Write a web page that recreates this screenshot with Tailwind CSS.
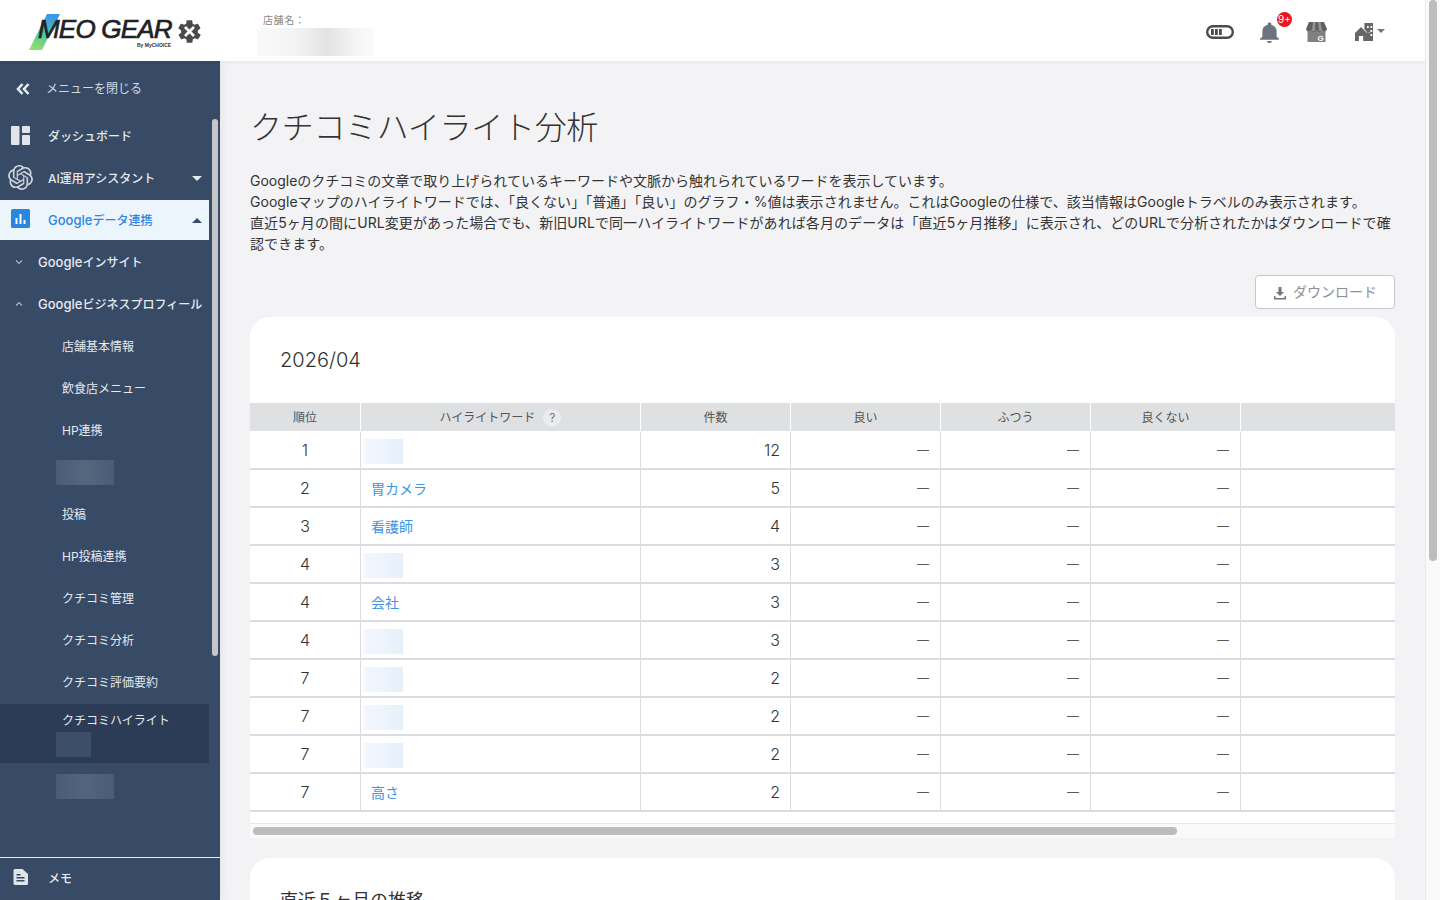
<!DOCTYPE html>
<html lang="ja">

<head>
    <meta charset="UTF-8">
    <meta name="viewport" content="width=device-width, initial-scale=1.0">
    <title>クチコミハイライト分析</title>
    <script src="https://cdn.jsdelivr.net/npm/@tailwindcss/browser@4"></script>
</head>

<body class="h-[900px] overflow-hidden bg-[#f3f3f6] text-[#333] font-['Inter','Noto_Sans_CJK_JP',sans-serif]">
    <div class="flex h-[900px]">
        <div class="w-[1425px] h-[900px] flex flex-col overflow-hidden">
            <!-- header -->
            <header class="h-[61px] shrink-0 bg-white flex items-center shadow-[0_1px_4px_rgba(0,0,0,0.06)] z-10">
                <div class="w-[257px] pl-[29px] pt-[4px] flex items-center shrink-0">
                    <div class="relative w-[175px] h-[38px]">
                        <svg class="absolute left-0 top-0" width="32" height="37" viewBox="0 0 32 37">
                            <defs>
                                <linearGradient id="lg" x1="0.6" y1="0" x2="0.3" y2="1">
                                    <stop offset="0" stop-color="#3b96f0" />
                                    <stop offset="0.5" stop-color="#4cc2a0" />
                                    <stop offset="1" stop-color="#8fe070" />
                                </linearGradient>
                            </defs>
                            <path d="M18 0h13L13 36H0z" fill="url(#lg)" />
                        </svg>
                        <span class="absolute left-[9px] top-[3px] font-['Liberation_Sans'] italic font-normal text-[26px] leading-[24px] tracking-[-0.8px] whitespace-nowrap text-[#1f2226] [-webkit-text-stroke:0.7px_#1f2226]">MEO GEAR</span>
                        <span class="absolute left-[108px] top-[28px] font-['Liberation_Sans'] font-bold text-[5px] leading-[7px] text-[#333]">By MyCHOICE</span>
                        <svg class="absolute left-[147px] top-[4px]" width="27" height="27" viewBox="0 0 24 24" fill="#4a4a4a">
                            <path d="M19.4 13a7.6 7.6 0 0 0 0-2l2.1-1.6a.5.5 0 0 0 .1-.7l-2-3.4a.5.5 0 0 0-.6-.2l-2.5 1a7.3 7.3 0 0 0-1.7-1l-.4-2.6a.5.5 0 0 0-.5-.5h-4a.5.5 0 0 0-.5.5l-.4 2.6a7.3 7.3 0 0 0-1.7 1l-2.5-1a.5.5 0 0 0-.6.2l-2 3.4a.5.5 0 0 0 .1.7L4.6 11a7.6 7.6 0 0 0 0 2l-2.1 1.6a.5.5 0 0 0-.1.7l2 3.4c.1.2.4.3.6.2l2.5-1c.5.4 1.1.8 1.7 1l.4 2.6c0 .3.2.5.5.5h4c.3 0 .5-.2.5-.5l.4-2.6c.6-.3 1.2-.6 1.7-1l2.5 1c.2.1.5 0 .6-.2l2-3.4a.5.5 0 0 0-.1-.7z" />
                            <path d="M8 8l8 8M16 8l-8 8" stroke="#fff" stroke-width="2.4" />
                        </svg>
                    </div>
                </div>
                <div class="w-[117px] shrink-0 pt-[7px]">
                    <div class="pl-[6px] text-[10px] leading-[14px] text-[#888] tracking-[0.6px]">店舗名：</div>
                    <div class="h-[28px] mt-[1px] bg-[linear-gradient(90deg,#fafafa_0%,#f2f2f2_35%,#e3e3e3_60%,#f5f5f5_85%,#fbfbfb_100%)]"></div>
                </div>
                <div class="flex-1"></div>
                <div class="flex items-center pt-[3px]">
                    <svg class="mr-[26px]" width="28" height="14" viewBox="0 0 28 14">
                        <rect x="1.2" y="1.2" width="25.6" height="11.6" rx="5.8" fill="none" stroke="#4a4a4a" stroke-width="2.4" />
                        <rect x="5" y="4" width="2.8" height="6" fill="#4a4a4a" />
                        <rect x="9" y="4" width="2.8" height="6" fill="#4a4a4a" />
                        <rect x="13" y="4" width="2.8" height="6" fill="#4a4a4a" />
                    </svg>
                    <div class="relative w-[19px] h-[21px] mr-[27px]">
                        <svg width="19" height="21" viewBox="4 2 16 20" preserveAspectRatio="none" fill="#6b7480">
                            <path d="M12 22c1.1 0 2-.9 2-2h-4c0 1.100.9 2 2 2zm6-6v-5c0-3.070-1.640-5.640-4.500-6.320V4c0-.830-.670-1.500-1.500-1.500s-1.500.670-1.500 1.500v.680C7.630 5.360 6 7.920 6 11v5l-2 2v1h16v-1l-2-2z" />
                        </svg>
                        <span class="absolute left-[17px] top-[-10px] w-[15px] h-[15px] rounded-full bg-[#e8141f] text-white text-[10px] leading-[15px] text-center">9+</span>
                    </div>
                    <svg class="mr-[28px]" width="21" height="20" viewBox="0 0 21 20">
                        <path d="M1.500 8h18v12h-18z" fill="#808080" />
                        <path d="M3 0h15l3 7a2.600 2.600 0 0 1-5 .6 2.800 2.800 0 0 1-5.500 0 2.800 2.800 0 0 1-5.500 0A2.600 2.600 0 0 1 0 7z" fill="#5f5f5f" />
                        <path d="M7 0h2.500L9 9H6zM12 0h2.500L16 9h-3z" fill="#939393" />
                        <text x="11.500" y="18.500" font-size="8" font-weight="700" fill="#fff" font-family="Liberation Sans">G</text>
                    </svg>
                    <svg class="mr-[4px]" width="18" height="18" viewBox="0 0 21 18" preserveAspectRatio="none" fill="#666">
                        <path d="M11 0h10v18h-7V9l-3-2.500z" />
                        <path d="M7 4l7 6v8H9.500v-5h-5v5H0v-8z" />
                        <path d="M14 3h2v2h-2zM18 3h2v2h-2zM18 7h2v2h-2zM18 11h2v2h-2zM16 9h1v1h-1z" fill="#fff" />
                    </svg>
                    <span class="mr-[40px] w-0 h-0 border-x-[4px] border-x-transparent border-t-[4px] border-t-[#777] mb-[2px]"></span>
                </div>
            </header>

            <div class="flex flex-1 min-h-0">
                <!-- sidebar -->
                <aside class="relative w-[220px] shrink-0 bg-[#374a66] text-[#e6e9ee] text-[12px] font-medium shadow-[2px_0_8px_rgba(0,0,0,0.06)] flex flex-col">
                    <div class="h-[54px] shrink-0 flex items-center pl-[16px] pt-[1px] font-normal">
                        <svg width="14" height="12" viewBox="0 0 14 12" fill="none" stroke="#e6e9ee" stroke-width="2.600">
                            <path d="M6.500 1L2 6l4.500 5M12.500 1L8 6l4.500 5" />
                        </svg>
                        <span class="ml-[16px] text-[#d4d9e0]">メニューを閉じる</span>
                    </div>
                    <div class="w-[209px] flex-1 min-h-0">
                        <div class="h-[42px] flex items-center">
                            <svg class="ml-[11px] mb-[2px]" width="19" height="19" viewBox="0 0 19 19" fill="#e1e5ea">
                                <rect x="0" y="0" width="8.500" height="19" rx="1" />
                                <rect x="11" y="0" width="8" height="7" rx="1" />
                                <rect x="11" y="9" width="8" height="10" rx="1" />
                            </svg>
                            <span class="ml-[18px] pt-[2px]">ダッシュボード</span>
                        </div>
                        <div class="h-[42px] flex items-center">
                            <svg class="ml-[8px] mb-[2px]" width="25" height="25" viewBox="0 0 24 24" fill="#cfd4db">
                                <path d="M22.2819 9.8211a5.9847 5.9847 0 0 0-.5157-4.9108 6.0462 6.0462 0 0 0-6.5098-2.9A6.0651 6.0651 0 0 0 4.9807 4.1818a5.9847 5.9847 0 0 0-3.9977 2.9 6.0462 6.0462 0 0 0 .7427 7.0966 5.98 5.98 0 0 0 .511 4.9107 6.051 6.051 0 0 0 6.5146 2.9001A5.9847 5.9847 0 0 0 13.2599 24a6.0557 6.0557 0 0 0 5.7718-4.2058 5.9894 5.9894 0 0 0 3.9977-2.9001 6.0557 6.0557 0 0 0-.7475-7.0729zm-9.022 12.6081a4.4755 4.4755 0 0 1-2.8764-1.0408l.1419-.0804 4.7783-2.7582a.7948.7948 0 0 0 .3927-.6813v-6.7369l2.02 1.1686a.071.071 0 0 1 .038.052v5.5826a4.504 4.504 0 0 1-4.4945 4.4944zm-9.6607-4.1254a4.4708 4.4708 0 0 1-.5346-3.0137l.142.0852 4.783 2.7582a.7712.7712 0 0 0 .7806 0l5.8428-3.3685v2.3324a.0804.0804 0 0 1-.0332.0615L9.74 19.9502a4.4992 4.4992 0 0 1-6.1408-1.6464zM2.3408 7.8956a4.485 4.485 0 0 1 2.3655-1.9728V11.6a.7664.7664 0 0 0 .3879.6765l5.8144 3.3543-2.0201 1.1685a.0757.0757 0 0 1-.071 0l-4.8303-2.7865A4.504 4.504 0 0 1 2.3408 7.872zm16.5963 3.8558L13.1038 8.364 15.1192 7.2a.0757.0757 0 0 1 .071 0l4.8303 2.7913a4.4944 4.4944 0 0 1-.6765 8.1042v-5.6772a.79.79 0 0 0-.407-.667zm2.0107-3.0231l-.142-.0852-4.7735-2.7818a.7759.7759 0 0 0-.7854 0L9.409 9.2297V6.8974a.0662.0662 0 0 1 .0284-.0615l4.8303-2.7866a4.4992 4.4992 0 0 1 6.6802 4.66zM8.3065 12.863l-2.02-1.1638a.0804.0804 0 0 1-.038-.0567V6.0742a4.4992 4.4992 0 0 1 7.3757-3.4537l-.142.0805L8.704 5.459a.7948.7948 0 0 0-.3927.6813zm1.0976-2.3654l2.602-1.4998 2.6069 1.4998v2.9994l-2.5974 1.4997-2.6067-1.4997Z" />
                            </svg>
                            <span class="ml-[15px] pt-[2px]">AI運用アシスタント</span>
                            <span class="ml-auto mr-[7px] w-0 h-0 border-x-[5px] border-x-transparent border-t-[5px] border-t-[#e6e9ee]"></span>
                        </div>
                        <div class="h-[40px] my-[1px] bg-[#ecf4fc] flex items-center text-[#2b86e0]">
                            <svg class="ml-[11px] mb-[4px]" width="19" height="19" viewBox="0 0 19 19">
                                <rect width="19" height="19" rx="1.500" fill="#2b86e0" />
                                <path d="M4.500 9h2v6h-2zM8.500 5h2v10h-2zM12.500 11h2v4h-2z" fill="#fff" />
                            </svg>
                            <span class="ml-[18px] pt-[2px]"><span class="text-[13px]">Google</span>データ連携</span>
                            <span class="ml-auto mr-[7px] w-0 h-0 border-x-[5px] border-x-transparent border-b-[5px] border-b-[#374a66]"></span>
                        </div>
                        <div class="h-[42px] flex items-center">
                            <svg class="ml-[15px]" width="8" height="6" viewBox="0 0 8 6" fill="none" stroke="#aeb6c2" stroke-width="1.200">
                                <path d="M1 1.500l3 3 3-3" />
                            </svg>
                            <span class="ml-[15px] pt-[2px]"><span class="text-[13px]">Google</span>インサイト</span>
                        </div>
                        <div class="h-[42px] flex items-center">
                            <svg class="ml-[15px]" width="8" height="6" viewBox="0 0 8 6" fill="none" stroke="#aeb6c2" stroke-width="1.200">
                                <path d="M1 4.500l3-3 3 3" />
                            </svg>
                            <span class="ml-[15px] pt-[2px] whitespace-nowrap"><span class="text-[13px]">Google</span>ビジネスプロフィール</span>
                        </div>
                        <div class="h-[42px] flex items-center pl-[62px] pt-[2px] font-normal">店舗基本情報</div>
                        <div class="h-[42px] flex items-center pl-[62px] pt-[2px] font-normal">飲食店メニュー</div>
                        <div class="h-[42px] flex items-center pl-[62px] pt-[2px] font-normal">HP連携</div>
                        <div class="h-[42px] flex items-center pl-[56px]">
                            <div class="w-[58px] h-[25px] bg-[linear-gradient(90deg,#4a5c77,#56677f,#4a5c77)]"></div>
                        </div>
                        <div class="h-[42px] flex items-center pl-[62px] pt-[2px] font-normal">投稿</div>
                        <div class="h-[42px] flex items-center pl-[62px] pt-[2px] font-normal">HP投稿連携</div>
                        <div class="h-[42px] flex items-center pl-[62px] pt-[2px] font-normal">クチコミ管理</div>
                        <div class="h-[42px] flex items-center pl-[62px] pt-[2px] font-normal">クチコミ分析</div>
                        <div class="h-[42px] flex items-center pl-[62px] pt-[2px] font-normal">クチコミ評価要約</div>
                        <div class="h-[59px] mt-[1px] bg-[#2c3c57] pl-[62px] pt-[8px] font-normal">
                            <div class="leading-[18px]">クチコミハイライト</div>
                            <div class="w-[35px] h-[25px] mt-[2px] -ml-[6px] bg-[#3d4e68]"></div>
                        </div>
                        <div class="h-[25px] w-[58px] ml-[56px] mt-[11px] bg-[linear-gradient(90deg,#4a5c77,#53647d,#4a5c77)]"></div>
                    </div>
                    <div class="absolute left-[212px] top-[58px] w-[6px] h-[537px] rounded-full bg-[#c4c6ca]"></div>
                    <div class="absolute bottom-0 left-0 right-0 h-[43px] bg-[#374a66] border-t border-[#e6e9ee] flex items-center">
                        <svg class="ml-[13px] mb-[5px]" width="15" height="16" viewBox="0 0 15 16" fill="#e1e5ea">
                            <path d="M2 0h7.500L15 5v9.500a1.500 1.500 0 0 1-1.500 1.500h-11.500A1.500 1.500 0 0 1 .5 14.500v-13A1.500 1.500 0 0 1 2 0z" />
                            <path d="M3.500 8h8v1.500h-8zM3.500 11h8v1.500h-8zM3.500 5h4v1.500h-4z" fill="#374a66" />
                        </svg>
                        <span class="ml-[20px]">メモ</span>
                    </div>
                </aside>

                <!-- main -->
                <main class="flex-1 min-w-0 pl-[30px] pr-[30px] overflow-hidden">
                    <h1 class="mt-[45px] text-[32px] leading-[44px] font-light tracking-[-0.3px] text-[#333]">クチコミハイライト分析</h1>
                    <div class="mt-[20px] text-[14px] leading-[21px] text-[#333]">
                        <p>Googleのクチコミの文章で取り上げられているキーワードや文脈から触れられているワードを表示しています。</p>
                        <p class="tracking-[0.04px]">Googleマップのハイライトワードでは、「良くない」「普通」「良い」のグラフ・%値は表示されません。これはGoogleの仕様で、該当情報はGoogleトラベルのみ表示されます。</p>
                        <p class="tracking-[0.08px]">直近5ヶ月の間にURL変更があった場合でも、新旧URLで同一ハイライトワードがあれば各月のデータは「直近5ヶ月推移」に表示され、どのURLで分析されたかはダウンロードで確認できます。</p>
                    </div>
                    <div class="flex justify-end mt-[21px]">
                        <button class="w-[140px] h-[34px] pb-[2px] bg-white border border-[#c4c7cf] rounded-[4px] flex items-center justify-center text-[14px] text-[#8a8f98]">
                            <svg class="mr-[6px] mt-[3px]" width="14" height="14" viewBox="0 0 14 14" fill="#6f7680">
                                <path d="M5.500 1h3v5h2.500L7 10 3 6h2.500zM1 10h1.500v2h9v-2H13v3.500H1z" />
                            </svg>
                            ダウンロード
                        </button>
                    </div>

                    <section class="mt-[8px] bg-white rounded-t-[20px]">
                        <h2 class="h-[86px] pl-[30px] pt-[29px] text-[20px] leading-[28px] font-light text-[#333]">2026/04</h2>
                        <div class="grid grid-cols-[111px_280px_150px_150px_150px_150px_154px] h-[28px] bg-[#dfe0e2] text-[12px] text-[#555] text-center">
                            <div class="flex items-center justify-center pt-[1px] border-r border-white">順位</div>
                            <div class="flex items-center justify-center pt-[1px] border-r border-white">ハイライトワード<span class="ml-[8px] w-[18px] h-[18px] rounded-full bg-[#ececee] text-[#777] text-[12px] leading-[18px]">?</span></div>
                            <div class="flex items-center justify-center pt-[1px] border-r border-white">件数</div>
                            <div class="flex items-center justify-center pt-[1px] border-r border-white">良い</div>
                            <div class="flex items-center justify-center pt-[1px] border-r border-white">ふつう</div>
                            <div class="flex items-center justify-center pt-[1px] border-r border-white">良くない</div>
                            <div></div>
                        </div>
                        <div id="rows" class="pt-[1px] text-[16px] font-light text-[#333]">
                            <div class="grid grid-cols-[111px_280px_150px_150px_150px_150px_154px] h-[38px] border-b-2 border-[#dcdce0]">
                                <div class="flex items-center justify-center border-r border-[#dcdce0]">1</div>
                                <div class="flex items-center pl-[3px] pt-[3px] border-r border-[#dcdce0]"><div class="w-[39px] h-[25px] bg-[linear-gradient(90deg,#f2f7fd,#e6f0fb)]"></div></div>
                                <div class="flex items-center justify-end pr-[10px] border-r border-[#dcdce0]">12</div>
                                <div class="flex items-center justify-end pr-[11px] text-[12px] border-r border-[#dcdce0]">—</div>
                                <div class="flex items-center justify-end pr-[11px] text-[12px] border-r border-[#dcdce0]">—</div>
                                <div class="flex items-center justify-end pr-[11px] text-[12px] border-r border-[#dcdce0]">—</div>
                                <div></div>
                            </div>
                            <div class="grid grid-cols-[111px_280px_150px_150px_150px_150px_154px] h-[38px] border-b-2 border-[#dcdce0]">
                                <div class="flex items-center justify-center border-r border-[#dcdce0]">2</div>
                                <div class="flex items-center pl-[10px] text-[14px] font-normal text-[#3d93e6] border-r border-[#dcdce0]">胃カメラ</div>
                                <div class="flex items-center justify-end pr-[10px] border-r border-[#dcdce0]">5</div>
                                <div class="flex items-center justify-end pr-[11px] text-[12px] border-r border-[#dcdce0]">—</div>
                                <div class="flex items-center justify-end pr-[11px] text-[12px] border-r border-[#dcdce0]">—</div>
                                <div class="flex items-center justify-end pr-[11px] text-[12px] border-r border-[#dcdce0]">—</div>
                                <div></div>
                            </div>
                            <div class="grid grid-cols-[111px_280px_150px_150px_150px_150px_154px] h-[38px] border-b-2 border-[#dcdce0]">
                                <div class="flex items-center justify-center border-r border-[#dcdce0]">3</div>
                                <div class="flex items-center pl-[10px] text-[14px] font-normal text-[#3d93e6] border-r border-[#dcdce0]">看護師</div>
                                <div class="flex items-center justify-end pr-[10px] border-r border-[#dcdce0]">4</div>
                                <div class="flex items-center justify-end pr-[11px] text-[12px] border-r border-[#dcdce0]">—</div>
                                <div class="flex items-center justify-end pr-[11px] text-[12px] border-r border-[#dcdce0]">—</div>
                                <div class="flex items-center justify-end pr-[11px] text-[12px] border-r border-[#dcdce0]">—</div>
                                <div></div>
                            </div>
                            <div class="grid grid-cols-[111px_280px_150px_150px_150px_150px_154px] h-[38px] border-b-2 border-[#dcdce0]">
                                <div class="flex items-center justify-center border-r border-[#dcdce0]">4</div>
                                <div class="flex items-center pl-[3px] pt-[3px] border-r border-[#dcdce0]"><div class="w-[39px] h-[25px] bg-[linear-gradient(90deg,#f2f7fd,#e6f0fb)]"></div></div>
                                <div class="flex items-center justify-end pr-[10px] border-r border-[#dcdce0]">3</div>
                                <div class="flex items-center justify-end pr-[11px] text-[12px] border-r border-[#dcdce0]">—</div>
                                <div class="flex items-center justify-end pr-[11px] text-[12px] border-r border-[#dcdce0]">—</div>
                                <div class="flex items-center justify-end pr-[11px] text-[12px] border-r border-[#dcdce0]">—</div>
                                <div></div>
                            </div>
                            <div class="grid grid-cols-[111px_280px_150px_150px_150px_150px_154px] h-[38px] border-b-2 border-[#dcdce0]">
                                <div class="flex items-center justify-center border-r border-[#dcdce0]">4</div>
                                <div class="flex items-center pl-[10px] text-[14px] font-normal text-[#3d93e6] border-r border-[#dcdce0]">会社</div>
                                <div class="flex items-center justify-end pr-[10px] border-r border-[#dcdce0]">3</div>
                                <div class="flex items-center justify-end pr-[11px] text-[12px] border-r border-[#dcdce0]">—</div>
                                <div class="flex items-center justify-end pr-[11px] text-[12px] border-r border-[#dcdce0]">—</div>
                                <div class="flex items-center justify-end pr-[11px] text-[12px] border-r border-[#dcdce0]">—</div>
                                <div></div>
                            </div>
                            <div class="grid grid-cols-[111px_280px_150px_150px_150px_150px_154px] h-[38px] border-b-2 border-[#dcdce0]">
                                <div class="flex items-center justify-center border-r border-[#dcdce0]">4</div>
                                <div class="flex items-center pl-[3px] pt-[3px] border-r border-[#dcdce0]"><div class="w-[39px] h-[25px] bg-[linear-gradient(90deg,#f2f7fd,#e6f0fb)]"></div></div>
                                <div class="flex items-center justify-end pr-[10px] border-r border-[#dcdce0]">3</div>
                                <div class="flex items-center justify-end pr-[11px] text-[12px] border-r border-[#dcdce0]">—</div>
                                <div class="flex items-center justify-end pr-[11px] text-[12px] border-r border-[#dcdce0]">—</div>
                                <div class="flex items-center justify-end pr-[11px] text-[12px] border-r border-[#dcdce0]">—</div>
                                <div></div>
                            </div>
                            <div class="grid grid-cols-[111px_280px_150px_150px_150px_150px_154px] h-[38px] border-b-2 border-[#dcdce0]">
                                <div class="flex items-center justify-center border-r border-[#dcdce0]">7</div>
                                <div class="flex items-center pl-[3px] pt-[3px] border-r border-[#dcdce0]"><div class="w-[39px] h-[25px] bg-[linear-gradient(90deg,#f2f7fd,#e6f0fb)]"></div></div>
                                <div class="flex items-center justify-end pr-[10px] border-r border-[#dcdce0]">2</div>
                                <div class="flex items-center justify-end pr-[11px] text-[12px] border-r border-[#dcdce0]">—</div>
                                <div class="flex items-center justify-end pr-[11px] text-[12px] border-r border-[#dcdce0]">—</div>
                                <div class="flex items-center justify-end pr-[11px] text-[12px] border-r border-[#dcdce0]">—</div>
                                <div></div>
                            </div>
                            <div class="grid grid-cols-[111px_280px_150px_150px_150px_150px_154px] h-[38px] border-b-2 border-[#dcdce0]">
                                <div class="flex items-center justify-center border-r border-[#dcdce0]">7</div>
                                <div class="flex items-center pl-[3px] pt-[3px] border-r border-[#dcdce0]"><div class="w-[39px] h-[25px] bg-[linear-gradient(90deg,#f2f7fd,#e6f0fb)]"></div></div>
                                <div class="flex items-center justify-end pr-[10px] border-r border-[#dcdce0]">2</div>
                                <div class="flex items-center justify-end pr-[11px] text-[12px] border-r border-[#dcdce0]">—</div>
                                <div class="flex items-center justify-end pr-[11px] text-[12px] border-r border-[#dcdce0]">—</div>
                                <div class="flex items-center justify-end pr-[11px] text-[12px] border-r border-[#dcdce0]">—</div>
                                <div></div>
                            </div>
                            <div class="grid grid-cols-[111px_280px_150px_150px_150px_150px_154px] h-[38px] border-b-2 border-[#dcdce0]">
                                <div class="flex items-center justify-center border-r border-[#dcdce0]">7</div>
                                <div class="flex items-center pl-[3px] pt-[3px] border-r border-[#dcdce0]"><div class="w-[39px] h-[25px] bg-[linear-gradient(90deg,#f2f7fd,#e6f0fb)]"></div></div>
                                <div class="flex items-center justify-end pr-[10px] border-r border-[#dcdce0]">2</div>
                                <div class="flex items-center justify-end pr-[11px] text-[12px] border-r border-[#dcdce0]">—</div>
                                <div class="flex items-center justify-end pr-[11px] text-[12px] border-r border-[#dcdce0]">—</div>
                                <div class="flex items-center justify-end pr-[11px] text-[12px] border-r border-[#dcdce0]">—</div>
                                <div></div>
                            </div>
                            <div class="grid grid-cols-[111px_280px_150px_150px_150px_150px_154px] h-[38px] border-b-2 border-[#dcdce0]">
                                <div class="flex items-center justify-center border-r border-[#dcdce0]">7</div>
                                <div class="flex items-center pl-[10px] text-[14px] font-normal text-[#3d93e6] border-r border-[#dcdce0]">高さ</div>
                                <div class="flex items-center justify-end pr-[10px] border-r border-[#dcdce0]">2</div>
                                <div class="flex items-center justify-end pr-[11px] text-[12px] border-r border-[#dcdce0]">—</div>
                                <div class="flex items-center justify-end pr-[11px] text-[12px] border-r border-[#dcdce0]">—</div>
                                <div class="flex items-center justify-end pr-[11px] text-[12px] border-r border-[#dcdce0]">—</div>
                                <div></div>
                            </div>
                        </div>
                        <div class="h-[11px]"></div>
                        <div class="h-[15px] bg-[#fafafa] border-t border-[#e8e8e8] pt-[3px] pl-[3px]">
                            <div class="w-[924px] h-[8px] rounded-full bg-[#bdbdbd]"></div>
                        </div>
                    </section>

                    <section class="mt-[20px] h-[100px] bg-white rounded-t-[20px] pl-[30px] pt-[29px] text-[18px] leading-[28px] text-[#333]">直近５ヶ月の推移</section>
                </main>
            </div>
        </div>

        <!-- page scrollbar -->
        <div class="w-[15px] h-[900px] bg-[#fafafa] border-l border-[#e8e8e8] px-[3px]">
            <div class="w-[8px] h-[561px] rounded-full bg-[#bdbdbd]"></div>
        </div>
    </div>
</body>

</html>
